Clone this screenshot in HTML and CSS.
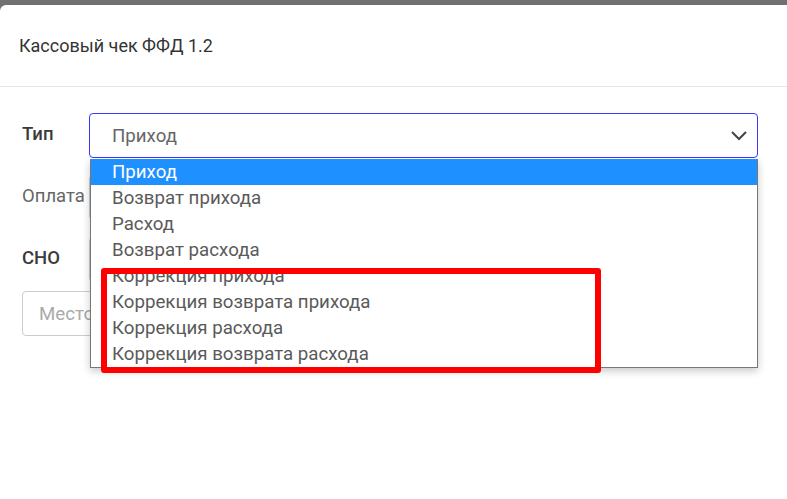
FILE: index.html
```html
<!DOCTYPE html>
<html lang="ru">
<head>
    <meta charset="UTF-8">
    <meta name="viewport" content="width=device-width, initial-scale=1.0">
    <title>Кассовый чек ФФД 1.2</title>
    <link rel="stylesheet" href="styles.css">
</head>
<body>
    <div class="modal">
        <div class="modal-header">
            <h1>Кассовый чек ФФД 1.2</h1>
        </div>

        <div class="modal-body">
            <div class="form-row">
                <label class="label strong">Тип</label>
                <div class="select-wrap">
                    <div class="select focused">
                        <span>Приход</span>
                        <svg class="chevron" width="18" height="12" viewBox="0 0 18 12">
                            <polyline points="2,2 9,9 16,2" fill="none" stroke="#444" stroke-width="2"/>
                        </svg>
                    </div>
                    <ul class="dropdown">
                        <li class="active">Приход</li>
                        <li>Возврат прихода</li>
                        <li>Расход</li>
                        <li>Возврат расхода</li>
                        <li>Коррекция прихода</li>
                        <li>Коррекция возврата прихода</li>
                        <li>Коррекция расхода</li>
                        <li>Коррекция возврата расхода</li>
                    </ul>
                    <div class="highlight"></div>
                </div>
            </div>

            <div class="form-row">
                <label class="label">Оплата</label>
                <div class="select"><span></span></div>
            </div>

            <div class="form-row">
                <label class="label strong">СНО</label>
                <div class="select"><span></span></div>
            </div>

            <input class="text-input" type="text" placeholder="Место расчётов">
        </div>
    </div>
</body>
</html>
```

FILE: styles.css
```css
html, body {
    margin: 0;
    height: 100%;
    overflow: hidden;
}
body {
    background: #717171;
    font-family: Roboto, "Noto Sans", sans-serif;
    padding-top: 5px;
    box-sizing: border-box;
}
.modal {
    background: #fff;
    height: 100%;
    border-top-left-radius: 6px;
}
.modal-header {
    height: 81px;
    padding-left: 19px;
    border-bottom: 1px solid #e5e5e5;
    display: flex;
    align-items: center;
}
.modal-header h1 {
    margin: 0;
    font-size: 18px;
    font-weight: normal;
    line-height: 1;
    color: #333;
}
.modal-body {
    padding: 26px 29px 0 22px;
}
.form-row {
    display: flex;
    align-items: center;
    margin-bottom: 17px;
}
.label {
    width: 67px;
    flex-shrink: 0;
    font-size: 18.5px;
    line-height: 1;
    color: #666;
    margin-top: -3px;
}
.label.strong {
    font-weight: 500;
    color: #3a3a3a;
}
.select-wrap {
    flex: 1;
    position: relative;
}
.select {
    flex: 1;
    height: 45px;
    box-sizing: border-box;
    border: 1px solid #ccc;
    border-radius: 4px;
    display: flex;
    align-items: center;
    justify-content: space-between;
    padding: 0 9px 0 22px;
    font-size: 18.7px;
    color: #666;
}
.select.focused {
    border-color: #3a3aff;
}
.chevron {
    display: block;
}
.dropdown {
    position: absolute;
    top: 46px;
    left: 1px;
    right: 0;
    margin: 0;
    padding: 0;
    list-style: none;
    background: #fff;
    border: 1px solid #777;
    border-top: none;
    box-shadow: 0 3px 8px rgba(0, 0, 0, 0.22);
    z-index: 2;
}
.dropdown li {
    height: 26px;
    line-height: 26px;
    padding-left: 21px;
    font-size: 18.7px;
    color: #5a5a5a;
}
.dropdown li.active {
    background: #1e90ff;
    color: #fff;
}
.highlight {
    position: absolute;
    top: 155px;
    left: 12px;
    width: 500px;
    height: 105px;
    box-sizing: border-box;
    border: 6px solid #ff0000;
    border-radius: 3px;
    z-index: 3;
}
.text-input {
    display: block;
    width: 100%;
    height: 45px;
    box-sizing: border-box;
    margin-top: -8px;
    border: 1px solid #ccc;
    border-radius: 4px;
    padding: 0 16px;
    font-family: Roboto, "Noto Sans", sans-serif;
    font-size: 18.7px;
}
.text-input::placeholder {
    color: #aaa;
}
```
